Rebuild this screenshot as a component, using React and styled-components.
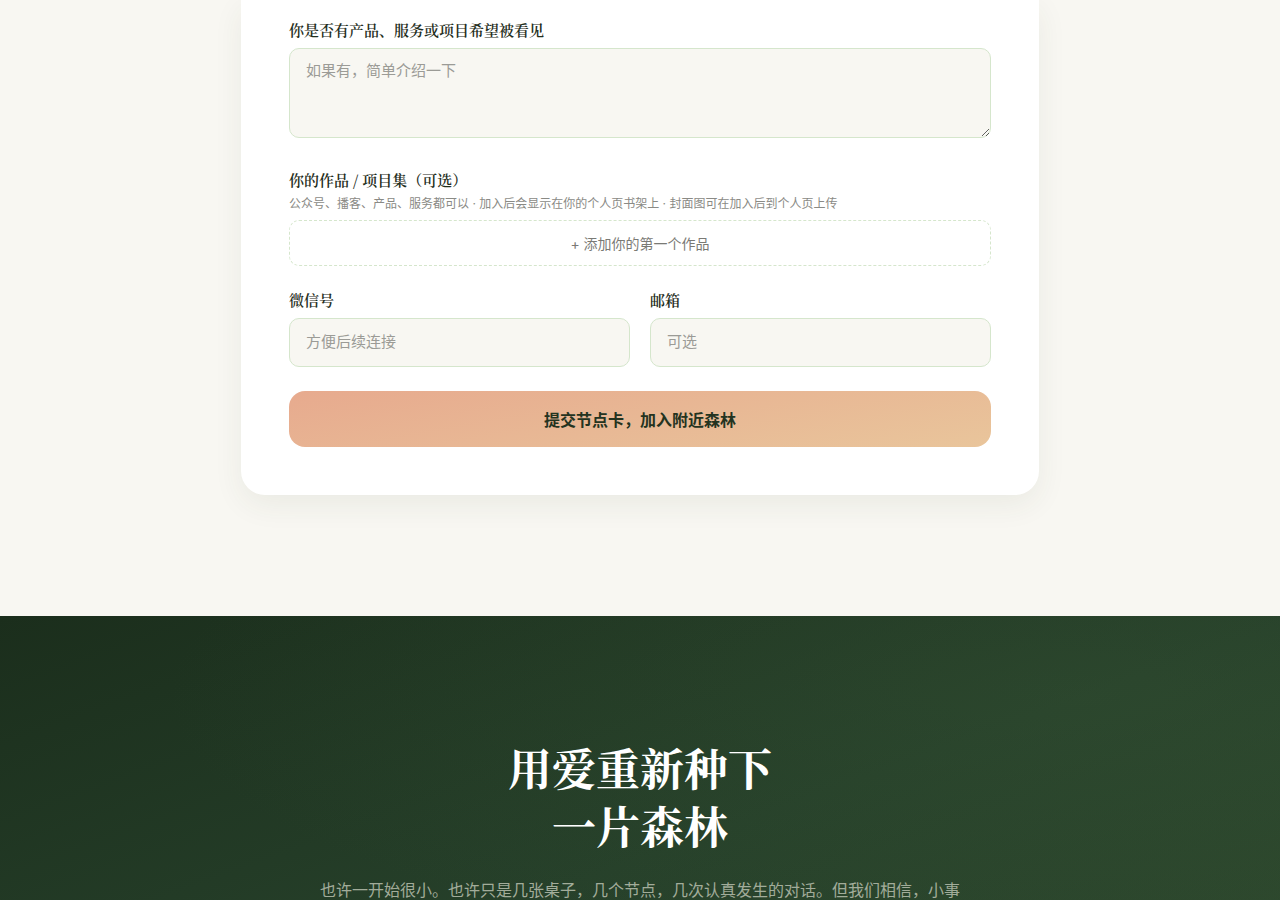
import styled, { createGlobalStyle } from "styled-components";

const GlobalStyle = createGlobalStyle`
  html, body {
    margin: 0;
    padding: 0;
    background: #f8f7f2;
  }
  body {
    font-family: Inter, "Noto Sans CJK SC", sans-serif;
    color: #1f2e1c;
  }
  * { box-sizing: border-box; }
`;

const serif = `"Noto Serif CJK SC", "Liberation Serif", "DejaVu Serif", serif`;
const sans = `Inter, "Noto Sans CJK SC", sans-serif`;

const Page = styled.div`
  background: #f8f7f2;
`;

const FormSection = styled.section`
  display: flex;
  justify-content: center;
  padding-bottom: 121px;
`;

const Card = styled.div`
  width: 798px;
  background: #ffffff;
  border-radius: 0 0 24px 24px;
  box-shadow: 0 10px 30px rgba(60, 70, 40, 0.07);
  padding: 20px 48px 48px;
  display: flex;
  flex-direction: column;
`;

const Field = styled.div`
  display: flex;
  flex-direction: column;
  margin-bottom: ${(p) => p.$mb || 0}px;
  flex: 1;
`;

const Label = styled.label`
  font-family: ${serif};
  font-size: 15px;
  font-weight: 600;
  line-height: 20px;
  color: #1f2e1c;
  margin-bottom: ${(p) => p.$mb || 8}px;
`;

const Hint = styled.div`
  font-family: ${sans};
  font-size: 12px;
  line-height: 16px;
  color: #8a8a85;
  margin-bottom: 8px;
`;

const TextArea = styled.textarea`
  height: 90px;
  width: 100%;
  background: #f8f7f2;
  border: 1px solid #d5e6cc;
  border-radius: 10px;
  padding: 11px 16px;
  font-family: ${sans};
  font-size: 15px;
  line-height: 22px;
  color: #1f2e1c;
  resize: vertical;
  outline: none;
  &::placeholder { color: #9b9b96; }
`;

const Input = styled.input`
  height: 49px;
  width: 100%;
  background: #f8f7f2;
  border: 1px solid #d5e6cc;
  border-radius: 10px;
  padding: 0 16px 2px;
  font-family: ${sans};
  font-size: 15px;
  color: #1f2e1c;
  outline: none;
  &::placeholder { color: #9b9b96; }
`;

const AddWork = styled.button`
  height: 46px;
  width: 100%;
  background: transparent;
  border: 1px dashed #d5e6cc;
  border-radius: 10px;
  font-family: ${sans};
  font-size: 14px;
  color: #7a7a75;
  cursor: pointer;
`;

const Row = styled.div`
  display: flex;
  gap: 20px;
  margin-bottom: 24px;
`;

const Submit = styled.button`
  height: 56px;
  width: 100%;
  border: none;
  border-radius: 16px;
  background: linear-gradient(170deg, #e7aa8e 0%, #e9c59b 100%);
  font-family: ${sans};
  font-size: 16px;
  font-weight: 700;
  color: #24331f;
  cursor: pointer;
`;

const Forest = styled.section`
  min-height: 400px;
  background:
    radial-gradient(ellipse at 85% 20%, rgba(60, 90, 55, 0.25), transparent 60%),
    linear-gradient(160deg, #1b2e1c 0%, #26402a 55%, #2f4a2e 100%);
  padding: 122px 0 80px;
  display: flex;
  flex-direction: column;
  align-items: center;
`;

const Title = styled.h2`
  margin: 0 0 22px;
  font-family: ${serif};
  font-size: 44px;
  font-weight: 700;
  line-height: 58px;
  color: #ffffff;
  text-align: center;
`;

const TitleLine = styled.span`
  display: block;
`;

const Lead = styled.p`
  margin: 0;
  max-width: 660px;
  font-family: ${sans};
  font-size: 16px;
  line-height: 28px;
  color: #a2ac9a;
  text-align: center;
`;

export default function App() {
  return (
    <Page>
      <GlobalStyle />
      <FormSection>
        <Card>
          <Field $mb={32}>
            <Label $mb={8}>你是否有产品、服务或项目希望被看见</Label>
            <TextArea placeholder="如果有，简单介绍一下" />
          </Field>
          <Field $mb={24}>
            <Label $mb={6}>你的作品 / 项目集（可选）</Label>
            <Hint>公众号、播客、产品、服务都可以 · 加入后会显示在你的个人页书架上 · 封面图可在加入后到个人页上传</Hint>
            <AddWork>+ 添加你的第一个作品</AddWork>
          </Field>
          <Row>
            <Field>
              <Label>微信号</Label>
              <Input placeholder="方便后续连接" />
            </Field>
            <Field>
              <Label>邮箱</Label>
              <Input placeholder="可选" />
            </Field>
          </Row>
          <Submit>提交节点卡，加入附近森林</Submit>
        </Card>
      </FormSection>
      <Forest>
        <Title>
          <TitleLine>用爱重新种下</TitleLine>
          <TitleLine>一片森林</TitleLine>
        </Title>
        <Lead>也许一开始很小。也许只是几张桌子，几个节点，几次认真发生的对话。但我们相信，小事</Lead>
      </Forest>
    </Page>
  );
}
